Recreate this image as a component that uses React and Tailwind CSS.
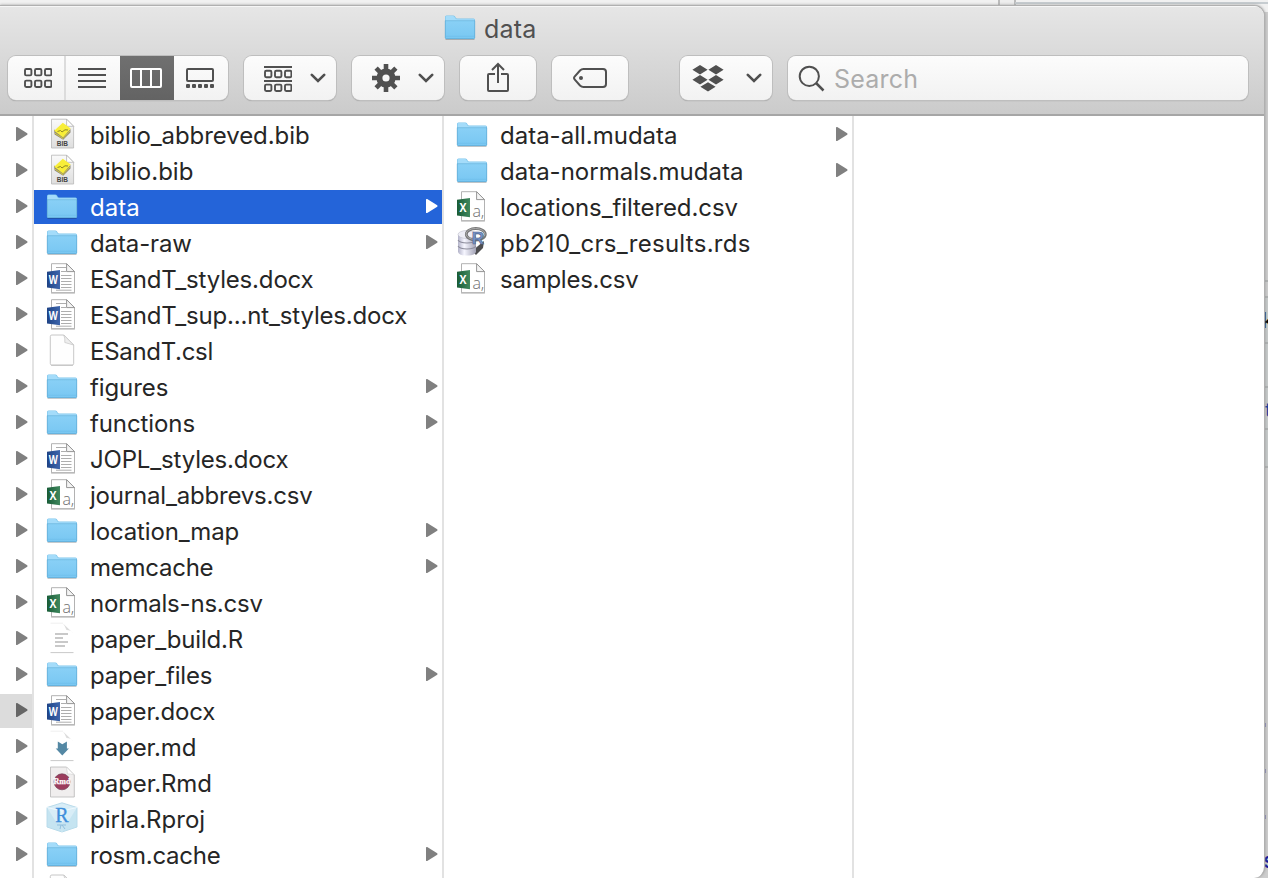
import React from "react";

const left = [
  ["bib", "biblio_abbreved.bib", false, "tracking-[-0.08px]"],
  ["bib", "biblio.bib"],
  ["folder", "data", true],
  ["folder", "data-raw", true, "tracking-[-0.12px]"],
  ["word", "ESandT_styles.docx", false, "tracking-[-0.17px]"],
  ["word", "ESandT_sup...nt_styles.docx", false, "tracking-[-0.17px]"],
  ["blank", "ESandT.csl", false, "tracking-[-0.3px]"],
  ["folder", "figures", true, "tracking-[-0.1px]"],
  ["folder", "functions", true, "tracking-[-0.1px]"],
  ["word", "JOPL_styles.docx", false, "tracking-[-0.17px]"],
  ["csv", "journal_abbrevs.csv", false, "tracking-[-0.19px]"],
  ["folder", "location_map", true, "tracking-[-0.15px]"],
  ["folder", "memcache", true, "tracking-[-0.25px]"],
  ["csv", "normals-ns.csv", false, "tracking-[-0.2px]"],
  ["text", "paper_build.R", false, "tracking-[-0.18px]"],
  ["folder", "paper_files", true, "tracking-[-0.18px]"],
  ["word", "paper.docx", false, "tracking-[-0.17px]"],
  ["md", "paper.md", false, "tracking-[-0.12px]"],
  ["rmd", "paper.Rmd", false, "tracking-[-0.1px]"],
  ["rproj", "pirla.Rproj"],
  ["folder", "rosm.cache", true, "tracking-[-0.25px]"],
  ["blank", ""],
];

const right = [
  ["folder", "data-all.mudata", true],
  ["folder", "data-normals.mudata", true],
  ["csv", "locations_filtered.csv", false, "tracking-[-0.1px]"],
  ["rds", "pb210_crs_results.rds", false, "tracking-[0.28px]"],
  ["csv", "samples.csv", false, "tracking-[-0.25px]"],
];

function Arrow({ className = "text-[#808080]" }) {
  return (
    <svg viewBox="0 0 12 34" className={"h-[34px] w-3 shrink-0 " + className}>
      <path d="M0 9.8Q0 8.6 1.2 9.1L11.2 15.2Q12 16 11.2 16.8L1.2 22.9Q0 23.4 0 22.2Z" fill="currentColor" />
    </svg>
  );
}

function Folder() {
  return (
    <g>
      <path d="M1.5 28.2H30.5" stroke="#000" strokeOpacity=".22" strokeWidth="1.4" />
      <path d="M1 6Q1 4.4 2.5 4.4H9.3Q10.3 4.4 10.9 5.3L11.8 6.8Q12.2 7.4 13 7.4H29.5Q31 7.4 31 8.9V26H1Z" fill="#7cc5ec" />
      <path d="M1.6 6.2Q1.6 5 2.8 5H9Q9.9 5 10.4 5.8L11.5 7.6Q11.9 8.2 12.8 8.2H30.2V10H1.6Z" fill="#a4dcfa" />
      <path d="M1 9.7H31V26.5Q31 28 29.5 28H2.5Q1 28 1 26.5Z" fill="url(#folderFill)" />
      <path d="M1 9.7H31" stroke="#69b4dd" strokeWidth=".7" />
      <path d="M1.3 9.7V26.5Q1.3 27.6 2.5 27.6H29.5Q30.7 27.6 30.7 26.5V9.7" fill="none" stroke="#5ea9d3" strokeWidth=".7" />
      <path d="M2 25.3H30" stroke="#6ab8e4" strokeWidth=".5" />
    </g>
  );
}

function Page({ stroke = "#a9a9a9", fill = "#fff" }) {
  return (
    <g>
      <path d="M5.5 1.7H20.6L28.5 9.6V30.7H5.5Z" fill={fill} stroke={stroke} strokeWidth=".9" />
      <path d="M20.6 1.7V9.6H28.5Z" fill="#f4f4f4" stroke="#8a8a8a" strokeWidth=".9" />
      <path d="M5 31.3H29" stroke="#000" strokeOpacity=".2" strokeWidth=".8" />
    </g>
  );
}

function Badge({ color, letter }) {
  return (
    <g>
      <path d="M1 9.8L14 8V27.2L1 25.4Z" fill={color} />
      <text x={letter === "W" ? 2.8 : 3.6} y="21.6" textLength={letter === "W" ? 9 : 7} lengthAdjust="spacingAndGlyphs" fontFamily="Open Sans" fontWeight="700" fontSize="11.5" fill="#fff">{letter}</text>
    </g>
  );
}

function SoftPage() {
  return (
    <g>
      <path d="M4.5 1.5H17L27.5 11V30H4.5Z" fill="#fff" />
      <path d="M4.5 1.2H17" fill="none" stroke="#ececec" strokeWidth=".8" />
      <path d="M17 1.5L27 11Q25 8 20.5 8Q19 4 17 1.5Z" fill="#dcdcdc" />
      <path d="M4.5 30.6H27.5" stroke="#c9c9c9" strokeWidth="1" />
    </g>
  );
}

function Icon({ type }) {
  return (
    <svg viewBox="0 0 32 34" className="h-[34px] w-8 shrink-0">
      {type === "folder" && <Folder />}
      {type === "word" && (
        <g>
          <Page />
          <path d="M10 5.5H20M15 9.5H20M15 13.5H25.5M15 16.5H25.5M15 19.5H25.5M15 22.5H25.5M15 25.5H25.5M10 28.2H25.5" stroke="#a5a5a5" strokeWidth=".9" />
          <Badge color="url(#wordFill)" letter="W" />
        </g>
      )}
      {type === "csv" && (
        <g>
          <Page />
          <text x="16.4" y="27" fontFamily="Open Sans" fontWeight="300" fontSize="16" fill="#707070">a,</text>
          <Badge color="url(#excelFill)" letter="X" />
        </g>
      )}
      {type === "blank" && (
        <g>
          <path d="M4.3 2.5Q4.3 1 5.8 1H17.8L27.7 11V29.5Q27.7 31 26.2 31H5.8Q4.3 31 4.3 29.5Z" fill="#fefefe" stroke="#b9b9b9" strokeWidth=".8" />
          <path d="M17.8 1Q19.3 5 18.8 8.5L27.6 11L17.8 1Z" fill="#eee" stroke="#c4c4c4" strokeWidth=".7" />
          <path d="M5 31.4H27" stroke="#999" strokeOpacity=".6" strokeWidth=".7" />
        </g>
      )}
      {type === "text" && (
        <g>
          <SoftPage />
          <path d="M9 12H22M9 16H17M9 20H22M9 24H19" stroke="#b8b8b8" strokeWidth="1.4" />
        </g>
      )}
      {type === "md" && (
        <g>
          <SoftPage />
          <path d="M11.8 11.6L16.3 14.2L20.9 11.6V18.6H22.9L16.3 25.4L9.7 18.6H11.8Z" fill="#5488a4" />
        </g>
      )}
      {type === "rmd" && (
        <g>
          <path d="M4.5 1H20.5L28.3 9V31H4.5Z" fill="#f0eeee" stroke="#b7b7b7" strokeWidth=".8" />
          <path d="M20.5 1L28.3 9Q24 7.5 21.5 8Z" fill="#fff" stroke="#ccc" strokeWidth=".6" />
          <circle cx="16" cy="15.8" r="8" fill="#9c3d5e" stroke="#75455a" strokeWidth=".7" />
          <text x="16" y="18" textAnchor="middle" fontFamily="Liberation Serif" fontWeight="700" fontSize="8" fill="#fff" stroke="#fff" strokeWidth=".25">Rmd</text>
        </g>
      )}
      {type === "bib" && (
        <g>
          <path d="M5.5 1.2H20.6L27.6 8.3V30H5.5Z" fill="url(#bibFill)" stroke="#b8b8b8" strokeWidth=".8" />
          <path d="M20.6 1.2V8.3H27.6Z" fill="#fff" stroke="#aaa" strokeWidth=".7" />
          <path d="M8 11.5L18 17L24.5 11V14.5L17.2 21.8L8.6 16.5Z" fill="#8b877a" />
          <path d="M16.8 4.8L24.7 10.5L17 19.5L8.2 12.8Z" fill="#f8ee38" />
          <path d="M9 15.2L17 20.6L24 13" fill="none" stroke="#d8ca3a" strokeWidth="1" />
          <path d="M11.5 13.5L14.5 12.5L16 14L19 11.8L22 12" fill="none" stroke="#817a20" strokeWidth=".9" />
          <text x="16.4" y="27.7" textAnchor="middle" fontFamily="Liberation Sans" fontWeight="700" fontSize="6.5" fill="#444">BIB</text>
        </g>
      )}
      {type === "rproj" && (
        <g>
          <path d="M16 .8L31 5.5V25L16 30L1 25V5.5Z" fill="#d8edf7" stroke="#acd3e6" strokeWidth=".8" />
          <path d="M1 5.5L16 9L31 5.5M16 9V30" stroke="#f4fbff" strokeWidth=".8" fill="none" />
          <path d="M1 5.5L10 20L1 25ZM31 5.5L22 20L31 25ZM10 20H22L31 25L16 30L1 25Z" fill="#b9ddec" fillOpacity=".6" />
          <text x="16" y="20" textAnchor="middle" fontFamily="Liberation Serif" fontSize="20" fill="#3e8edb" stroke="#3e8edb" strokeWidth=".3">R</text>
          <path d="M11 23H20M15 23L14 27M19 27L16 23" stroke="#91bfdd" strokeWidth="1" />
        </g>
      )}
      {type === "rds" && (
        <g>
          <path d="M16 25L28 15L27 22L20 29Z" fill="#4e4e50" />
          <path d="M2 9V26Q3 29.5 10.5 29.5Q19 29.5 20 26V9Z" fill="url(#diskFill)" />
          <path d="M2 14Q4 17 11 17T20 14M2 20Q4 23 11 23T20 20" fill="none" stroke="#8e8e9d" strokeWidth="1.1" />
          <ellipse cx="11" cy="8.5" rx="9" ry="4" fill="#eeeef6" stroke="#b5b5c2" strokeWidth=".5" />
          <ellipse cx="19.8" cy="8.3" rx="9.5" ry="5.8" fill="none" stroke="#777" strokeWidth="2.8" />
          <ellipse cx="19.5" cy="8" rx="9.5" ry="5.5" fill="none" stroke="#aaa" strokeWidth="1" />
          <text x="15.8" y="18" fontFamily="Liberation Sans" fontWeight="700" fontSize="17" fill="#7594c9" stroke="#4e6288" strokeWidth=".6">R</text>
        </g>
      )}
    </svg>
  );
}

function Row({ item, selected }) {
  const [type, name, expandable, tracking = ""] = item;
  return (
    <div className={"mb-0.5 flex h-[34px] shrink-0 items-center pl-3 pr-1 " + (selected ? "bg-[#2464d9] text-white" : "text-[#262626]")}>
      <Icon type={type} />
      <span className={"ml-3 flex-1 whitespace-nowrap pt-0.5 text-[24px] leading-[34px] " + tracking}>{name}</span>
      {expandable && <Arrow className={selected ? "text-white" : "text-[#808080]"} />}
    </div>
  );
}

function Button({ className, children }) {
  return (
    <div className={"flex h-11 shrink-0 items-center overflow-hidden rounded-lg bg-linear-to-b from-[#fcfcfc] to-[#f2f2f2] shadow-[0_0_0_1px_#bebebe,0_1px_1px_0px_#8f8f8f] " + className}>
      {children}
    </div>
  );
}

function Chevron() {
  return (
    <svg viewBox="0 0 16 10" className="h-2.5 w-4 shrink-0">
      <path d="M1.8 1.8L8 8L14.2 1.8" fill="none" stroke="#505050" strokeWidth="2.6" strokeLinecap="round" strokeLinejoin="miter" />
    </svg>
  );
}

function Squares({ y }) {
  return [1, 11, 21].map((x) => <rect key={x} x={x} y={y} width="6.4" height="6.4" rx="1.2" />);
}

const gearTeeth = [0, 45, 90, 135, 180, 225, 270, 315];

function Toolbar() {
  return (
    <div className="mt-[7px] flex h-[50px] shrink-0 pl-2">
      <Button className="w-[220px]">
        <div className="flex h-11 w-[58px] items-center justify-center border-r-2 border-[#dcdcdc] pl-1">
          <svg viewBox="0 0 28.4 20" className="h-5 w-[28.4px]" fill="none" stroke="#505050" strokeWidth="1.9">
            <Squares y={1} /><Squares y={12.6} />
          </svg>
        </div>
        <div className="flex h-11 w-[54px] items-center pl-3">
          <svg viewBox="0 0 28 20" className="h-5 w-7"><path d="M0 1H28M0 7H28M0 13H28M0 19H28" stroke="#505050" strokeWidth="2" /></svg>
        </div>
        <div className="flex h-11 w-[54px] items-center bg-linear-to-b from-[#707070] to-[#636363] pl-2.5">
          <svg viewBox="0 0 32 20" className="h-5 w-8" fill="none" stroke="#fff" strokeWidth="2"><rect x="1" y="1" width="30" height="18" rx="1" /><path d="M11 1V19M21 1V19" /></svg>
        </div>
        <div className="flex h-11 w-[54px] items-center pl-3">
          <svg viewBox="0 0 28 20" className="h-5 w-7" fill="#505050"><rect x="1" y="1" width="26" height="12" rx="1" fill="none" stroke="#505050" strokeWidth="2" />{[0, 6, 12, 18, 24].map((x) => <rect key={x} x={x} y="16" width="4" height="4" rx="1" />)}</svg>
        </div>
      </Button>
      <Button className="ml-4 w-[92px] gap-[18px] pl-5">
        <svg viewBox="0 0 28.4 28" className="h-7 w-[28.4px] shrink-0" fill="none" stroke="#505050" strokeWidth="1.9"><path d="M0 3H28M0 17H28" /><Squares y={6.8} /><Squares y={20.6} /></svg>
        <Chevron />
      </Button>
      <Button className="ml-4 w-[92px] gap-[18px] pl-5">
        <svg viewBox="0 0 28 28" className="h-7 w-7" fill="#505050">
          {gearTeeth.map((angle) => <path key={angle} d="M11.7 0H16.3V6H11.7Z" transform={`rotate(${angle} 14 14)`} />)}
          <circle cx="14" cy="14" r="6.6" fill="none" stroke="#505050" strokeWidth="6" />
        </svg>
        <Chevron />
      </Button>
      <Button className="ml-4 w-[76px] justify-center">
        <svg viewBox="0 0 24 32" className="h-8 w-6" fill="none" stroke="#505050" strokeWidth="2"><path d="M9 12H3Q2 12 2 13V28Q2 29 3 29H21Q22 29 22 28V13Q22 12 21 12H15M12 21V2.5M6 8L12 2L18 8" /></svg>
      </Button>
      <Button className="ml-4 w-[76px] justify-center">
        <svg viewBox="0 0 34 20" className="h-5 w-[34px]" fill="none" stroke="#505050" strokeWidth="2"><path d="M10.5 1H30Q33 1 33 4V16Q33 19 30 19H10.5Q8.5 19 7 17.5L1.6 11.3Q.5 10 1.6 8.7L7 2.5Q8.5 1 10.5 1Z" /><circle cx="8" cy="10" r="2" fill="#505050" stroke="none" /></svg>
      </Button>
      <Button className="ml-[52px] w-[92px] gap-[22px] pl-3">
        <svg viewBox="0 0 32 28" className="h-7 w-8" fill="#505050"><path d="M8 1L15.6 5.7L8 10.4L.4 5.7ZM24 1L31.6 5.7L24 10.4L16.4 5.7ZM8 11L15.6 15.7L8 20.4L.4 15.7ZM24 11L31.6 15.7L24 20.4L16.4 15.7ZM16 18.2L23.6 22.8L16 27.5L8.4 22.8Z" /></svg>
        <Chevron />
      </Button>
      <Button className="ml-4 w-[460px] pl-[10px]">
        <svg viewBox="0 0 28 28" className="h-7 w-7" fill="none" stroke="#505050" strokeWidth="2"><circle cx="11.3" cy="12.3" r="9.6" /><path d="M18 19L25.5 26.5" strokeWidth="2.5" /></svg>
        <span className="ml-2 pt-0.5 text-[25px] leading-[42px] tracking-[0.2px] text-[#acacac]">Search</span>
      </Button>
    </div>
  );
}

function Backdrop() {
  return (
    <div className="absolute inset-0 bg-[#f1f1f1]">
      <div className="absolute left-[998px] top-0 h-[5px] w-[18px] border-x-2 border-[#bbb] bg-[#eee]" />
      <div className="absolute left-[1015px] top-[2px] h-0.5 w-[253px] bg-[#c6ccd0]" />
      <div className="absolute right-0 top-3 h-[866px] w-4 bg-[#cdcdcd]">
        <div className="absolute top-[284px] h-[172px] w-full bg-[#c6caca]" />
        {[268, 284, 330, 374, 416, 454].map((top) => <div key={top} className="absolute h-0.5 w-full bg-[#aeb1b1]" style={{ top }} />)}
        <span className="absolute left-[10px] top-[296px] text-[22px] leading-6 text-black">k</span>
        <span className="absolute left-[13px] top-[386px] text-[20px] leading-6 text-[#173c9d]">t</span>
        <span className="absolute left-[11px] top-[836px] text-[22px] font-medium leading-6 text-[#10109a]">s</span>
        {[711, 757, 803].map((top) => <div key={top} className="absolute left-3 h-1 w-[2px] bg-[#8585b5]" style={{ top }} />)}
      </div>
    </div>
  );
}

export default function App() {
  return (
    <div className="relative h-[878px] w-[1268px] overflow-hidden font-['Inter','Liberation_Sans',sans-serif]">
      <svg className="absolute size-0">
        <defs>
          <linearGradient id="folderFill" x2="0" y2="1"><stop stopColor="#89d0f6" /><stop offset="1" stopColor="#78c7f2" /></linearGradient>
          <linearGradient id="wordFill"><stop stopColor="#1e4385" /><stop offset="1" stopColor="#3e66ad" /></linearGradient>
          <linearGradient id="excelFill"><stop stopColor="#185c37" /><stop offset="1" stopColor="#40885e" /></linearGradient>
          <linearGradient id="bibFill" x2="0" y2="1"><stop stopColor="#fafafa" /><stop offset="1" stopColor="#dedede" /></linearGradient>
          <linearGradient id="diskFill"><stop stopColor="#b3b3c9" /><stop offset=".35" stopColor="#f6f6ff" /><stop offset="1" stopColor="#a2a2b5" /></linearGradient>
        </defs>
      </svg>
      <Backdrop />
      <div className="relative flex h-full flex-col pt-[5px]">
        <div className="flex h-[873px] w-[1265px] flex-col overflow-hidden rounded-r-[11px] border-r border-t border-[#b0b0b0] bg-white shadow-[0_0_3px_#999]">
          <header className="flex h-[110px] shrink-0 flex-col border-b-2 border-b-[#a6a6a6] border-t border-t-[#f6f6f6] bg-linear-to-b from-[#e6e6e6] to-[#cbcbcb]">
            <div className="flex h-[42px] shrink-0 items-center pl-[444px] text-[25px] text-[#505050]">
              <Icon type="folder" />
              <span className="ml-2 pt-0.5 leading-9 tracking-[0.2px]">data</span>
            </div>
            <Toolbar />
          </header>
          <main className="flex min-h-0 flex-1">
            <div className="flex w-[34px] shrink-0 flex-col overflow-hidden border-r-2 border-[#e2e2e2] pt-0.5">
              {left.slice(0, 21).map(([, name]) => (
                <div key={name} className={"mb-0.5 flex h-[34px] shrink-0 pl-4 " + (name === "paper.docx" ? "bg-[#dcdcdc]" : "")}>
                  <Arrow className={name === "paper.docx" ? "text-[#666]" : "text-[#808080]"} />
                </div>
              ))}
            </div>
            <div className="flex w-[410px] shrink-0 flex-col overflow-hidden border-r-2 border-[#e2e2e2] pt-0.5">
              {left.map((item) => <Row key={item[1]} item={item} selected={item[1] === "data"} />)}
            </div>
            <div className="flex w-[410px] shrink-0 flex-col overflow-hidden border-r-2 border-[#e2e2e2] pt-0.5">
              {right.map((item) => <Row key={item[1]} item={item} />)}
            </div>
          </main>
        </div>
      </div>
    </div>
  );
}
